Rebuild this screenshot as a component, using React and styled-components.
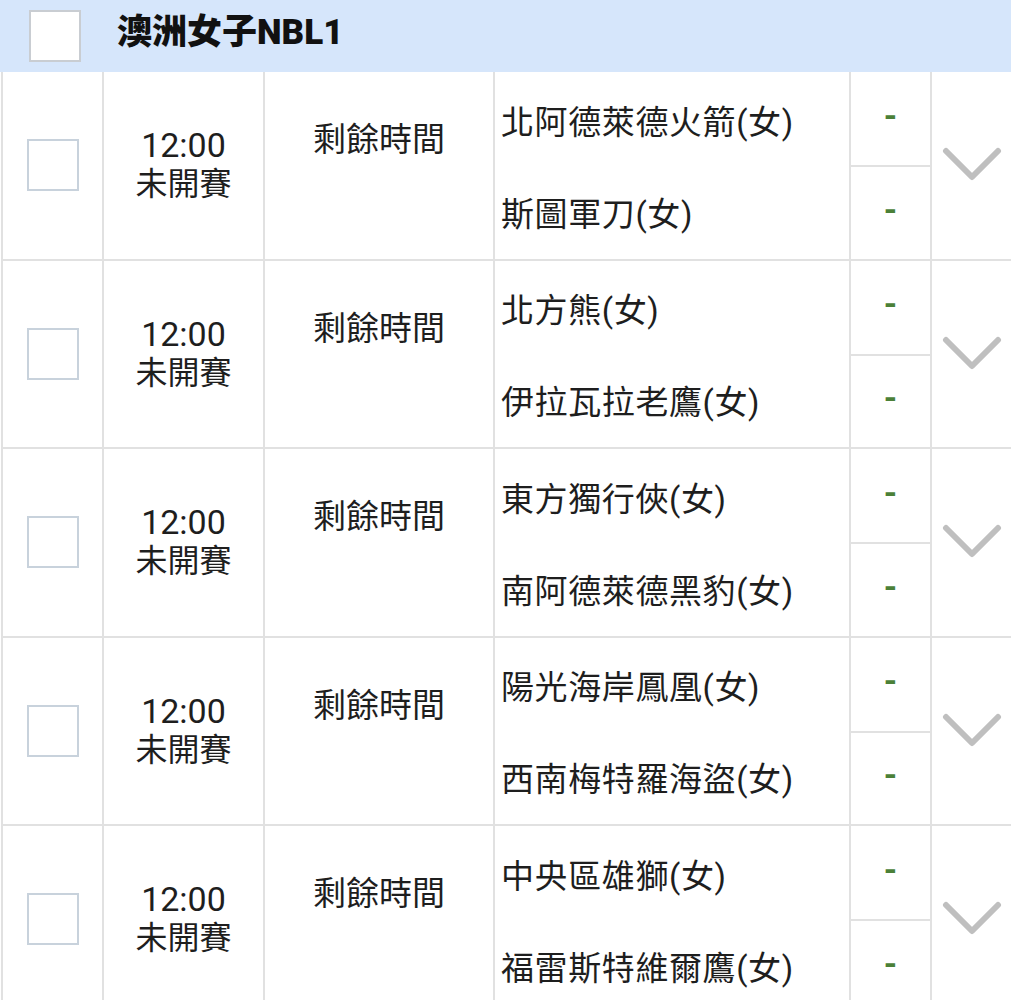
import React from "react";
import styled, { createGlobalStyle } from "styled-components";

const Global = createGlobalStyle`
  html, body { margin: 0; padding: 0; background: #fff; }
  body { font-family: Roboto, "Noto Sans CJK TC", "Noto Sans", sans-serif; color: #1e1e1e; }
`;

const Page = styled.div`
  width: 1011px;
`;

const Header = styled.div`
  height: 72px;
  background: #d6e6fb;
  display: flex;
  align-items: center;
  padding-left: 29px;
  box-sizing: border-box;
`;

const Box = styled.div`
  width: 52px;
  height: 52px;
  box-sizing: border-box;
  background: #fff;
  border: 2px solid ${(p) => p.$border};
  flex: none;
`;

const Title = styled.div`
  margin-left: 36px;
  font-size: 35px;
  font-weight: 900;
  color: #111;
  line-height: 40px;
  margin-top: -6px;
`;

const Row = styled.div`
  display: grid;
  grid-template-columns: 101px 161px 230px 356px 81px 81px;
  height: 188.5px;
  box-sizing: border-box;
  border-bottom: 2px solid #e1e1e1;
  margin-left: 1px;
`;

const Cell = styled.div`
  border-left: 2px solid #e1e1e1;
  box-sizing: border-box;
  min-width: 0;
`;

const CenterCell = styled(Cell)`
  display: flex;
  align-items: center;
  justify-content: center;
`;

const TimeCell = styled(Cell)`
  display: flex;
  flex-direction: column;
  align-items: center;
  justify-content: center;
  font-size: 32px;
  line-height: 39px;
`;

const Clock = styled.div`
  font-size: 34px;
`;

const StatusCell = styled(Cell)`
  text-align: center;
  font-size: 33px;
  line-height: 40px;
  padding-top: 48px;
`;

const Split = styled(Cell)`
  display: grid;
  grid-template-rows: 1fr 1fr;
`;

const TeamLine = styled.div`
  display: flex;
  align-items: center;
  padding-left: 6px;
  padding-top: ${(p) => (p.$top ? "2px" : "0")};
  font-size: 33px;
  letter-spacing: 0.6px;
  white-space: nowrap;
`;

const ScoreLine = styled.div`
  display: flex;
  align-items: center;
  justify-content: center;
  border-top: ${(p) => (p.$second ? "2px solid #e1e1e1" : "none")};
  color: #4b8038;
  font-size: 34px;
  font-weight: 700;
  padding-bottom: 8px;
`;

const Chevron = () => (
  <svg width="60" height="36" viewBox="0 0 60 36">
    <polyline
      points="4,4 30,30 56,4"
      fill="none"
      stroke="#bfbfbf"
      strokeWidth="6"
      strokeLinecap="round"
      strokeLinejoin="round"
    />
  </svg>
);

const matches = [
  ["北阿德萊德火箭(女)", "斯圖軍刀(女)"],
  ["北方熊(女)", "伊拉瓦拉老鷹(女)"],
  ["東方獨行俠(女)", "南阿德萊德黑豹(女)"],
  ["陽光海岸鳳凰(女)", "西南梅特羅海盜(女)"],
  ["中央區雄獅(女)", "福雷斯特維爾鷹(女)"],
];

export default function App() {
  return (
    <Page>
      <Global />
      <Header>
        <Box $border="#c9cdd2" />
        <Title>澳洲女子NBL1</Title>
      </Header>
      {matches.map(([home, away], i) => (
        <Row key={i}>
          <CenterCell>
            <Box $border="#c8d2dc" />
          </CenterCell>
          <TimeCell>
            <Clock>12:00</Clock>
            <div>未開賽</div>
          </TimeCell>
          <StatusCell>剩餘時間</StatusCell>
          <Split>
            <TeamLine $top>{home}</TeamLine>
            <TeamLine>{away}</TeamLine>
          </Split>
          <Split>
            <ScoreLine>-</ScoreLine>
            <ScoreLine $second>-</ScoreLine>
          </Split>
          <CenterCell>
            <Chevron />
          </CenterCell>
        </Row>
      ))}
    </Page>
  );
}
